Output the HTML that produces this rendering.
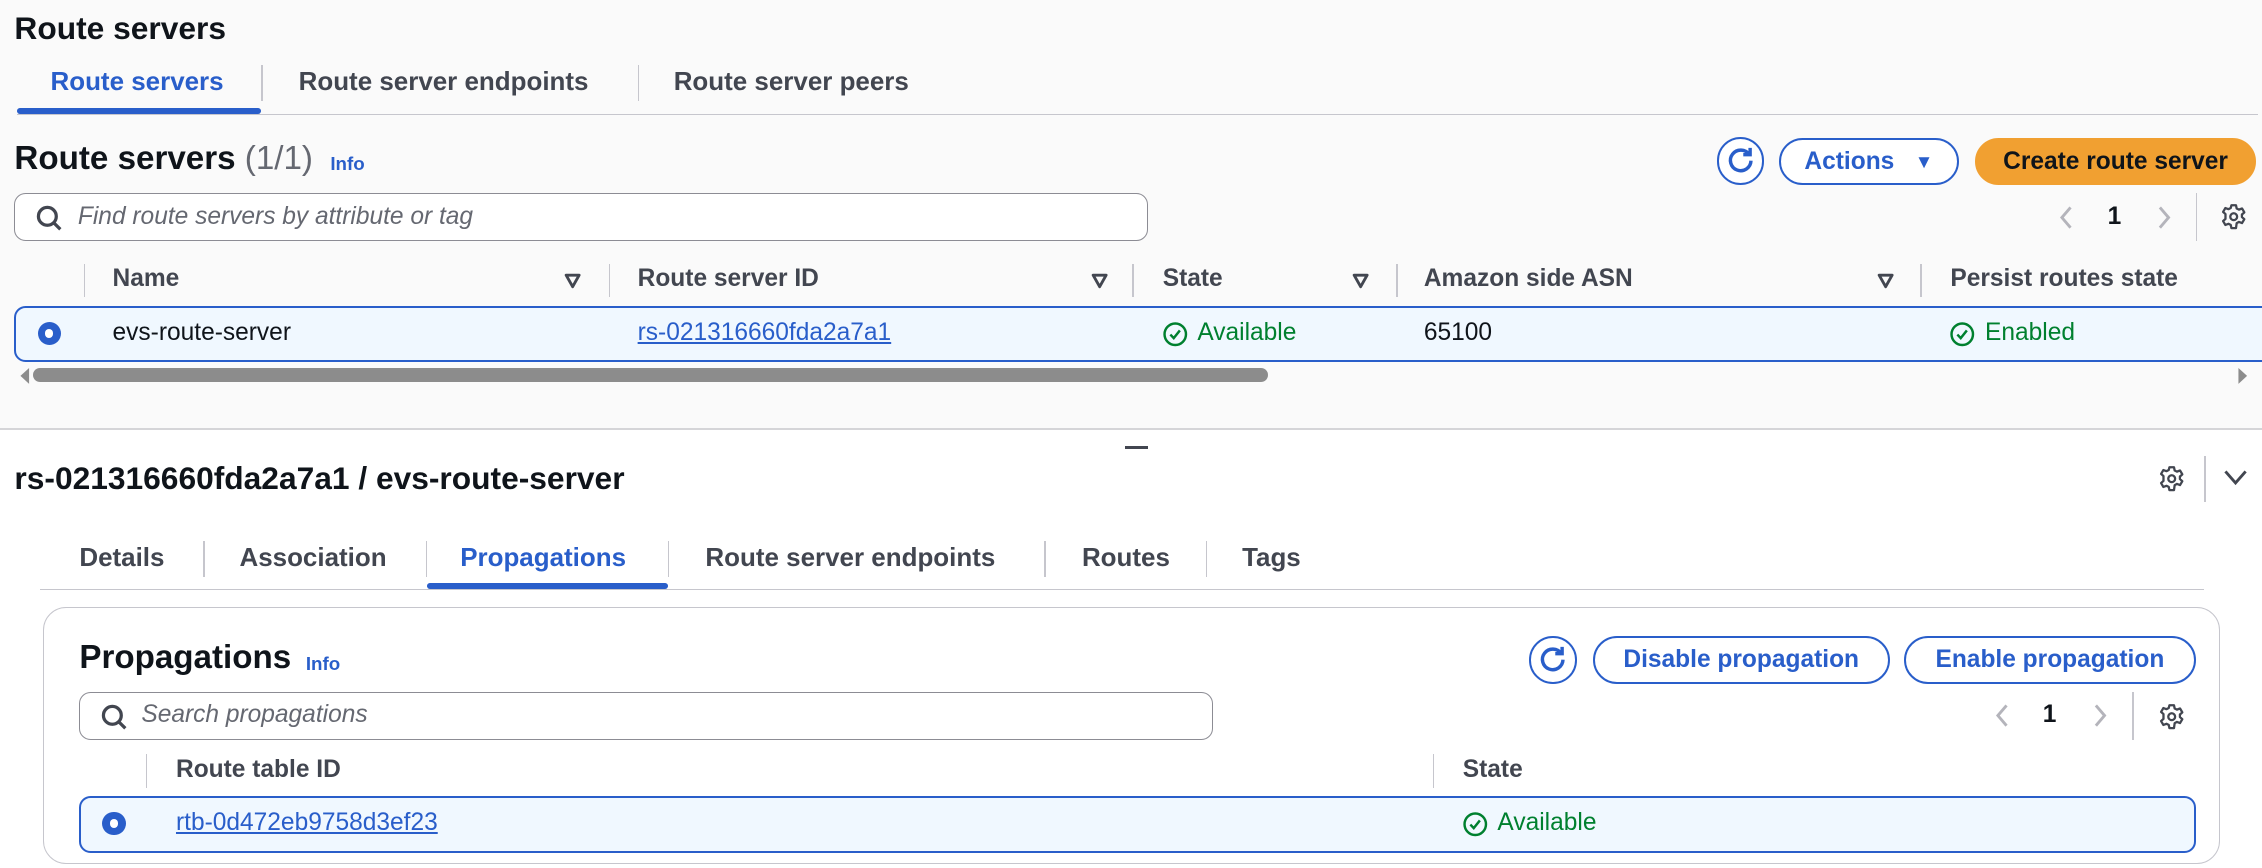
<!DOCTYPE html>
<html><head><meta charset="utf-8"><style>
html,body{margin:0;padding:0;width:2262px;height:868px;overflow:hidden;background:#fff}
#w{zoom:1.4426;width:1568px;height:602px;position:relative;font-family:"Liberation Sans",sans-serif;color:#0f141a;}
.a{position:absolute;white-space:nowrap}
.b{font-weight:bold}
.blue{color:#295eca}
.sep{position:absolute;width:1px;background:#c6c6cd}
.hl{position:absolute;height:1px;background:#c6c6cd}
.btn{position:absolute;border:2px solid #295eca;border-radius:18px;box-sizing:border-box;color:#295eca;font-weight:bold;font-size:17px;display:flex;align-items:center;justify-content:center;background:#fff}
.srch{position:absolute;border:1px solid #8c8c94;border-radius:8px;box-sizing:border-box;background:#fff}
.ph{position:absolute;font-style:italic;color:#656871;font-size:17px}
.row{position:absolute;border:2px solid #295eca;background:#f0f8ff;box-sizing:border-box}
.radio{position:absolute;width:16px;height:16px;border-radius:50%;background:#295eca;box-sizing:border-box}
.radio:after{content:"";position:absolute;left:5px;top:5px;width:6px;height:6px;border-radius:50%;background:#fff}
.lnk{color:#295eca;text-decoration:underline}
.ok{color:#00802f}
.h{font-size:17px;color:#424650;font-weight:bold}
.t{font-size:18px;font-weight:bold;color:#424650}
svg{position:absolute;overflow:visible}
</style></head><body><div id="w">
<div style="position:absolute;left:0;top:0;width:1568px;height:297px;background:#fafafa"></div>
<div class="hl" style="left:0;top:297px;width:1568px;background:#d5d5d8"></div>

<div class="a b" style="left:10px;top:7px;font-size:22px">Route servers</div>
<div class="a t blue" style="left:35px;top:46px;color:#295eca">Route servers</div>
<div class="a t" style="left:207px;top:46px">Route server endpoints</div>
<div class="a t" style="left:467px;top:46px">Route server peers</div>
<div class="sep" style="left:181px;top:45px;height:25px"></div>
<div class="sep" style="left:442px;top:45px;height:25px"></div>
<div class="hl" style="left:12px;top:79px;width:1553px"></div>
<div style="position:absolute;left:12px;top:75px;width:169px;height:4px;border-radius:2px;background:#295eca"></div>

<div class="a" style="left:10px;top:97px;font-size:23px"><b>Route servers</b> <span style="color:#656871">(1/1)</span></div>
<div class="a b blue" style="left:229px;top:106px;font-size:13px">Info</div>

<div class="btn" style="left:1190px;top:95px;width:33px;height:33px;border-radius:50%"></div>
<svg style="left:1197px;top:102px" width="19" height="19" viewBox="0 0 16 16"><path d="M13 4.5A6 6 0 1 0 14 8" fill="none" stroke="#295eca" stroke-width="2"/><path d="M9.5 4.5H13.5V0.5" fill="none" stroke="#295eca" stroke-width="2"/></svg>
<div class="btn" style="left:1233px;top:96px;width:125px;height:32px">Actions&nbsp;&nbsp;&nbsp;<span style="font-size:13px">▼</span></div>
<div class="btn" style="left:1369px;top:96px;width:195px;height:32px;background:#f1a031;border-color:#f1a031;color:#0f141a">Create route server</div>

<div class="srch" style="left:10px;top:134px;width:786px;height:33px"></div>
<svg style="left:25px;top:142px" width="18" height="18" viewBox="0 0 16 16"><circle cx="7" cy="7" r="5.5" fill="none" stroke="#424650" stroke-width="2"/><path d="M11 11L15 15" stroke="#424650" stroke-width="2"/></svg>
<div class="ph" style="left:54px;top:141px">Find route servers by attribute or tag</div>

<svg style="left:1427px;top:143px" width="10" height="16" viewBox="0 0 10 16"><path d="M8 1L2 8L8 15" fill="none" stroke="#b4b4bb" stroke-width="2"/></svg>
<div class="a b" style="left:1461px;top:141px;font-size:17px">1</div>
<svg style="left:1495px;top:143px" width="10" height="16" viewBox="0 0 10 16"><path d="M2 1L8 8L2 15" fill="none" stroke="#b4b4bb" stroke-width="2"/></svg>
<div class="sep" style="left:1522px;top:134px;height:33px"></div>
<svg style="left:1539px;top:141px" width="19" height="19" viewBox="0 0 24 24"><path d="M10 2h4l.6 2.8 2 1 2.7-1 2 3.4-2.1 1.9v2.2l2.1 1.9-2 3.4-2.7-1-2 1L14 22h-4l-.6-2.8-2-1-2.7 1-2-3.4 2.1-1.9V9.7L2.7 7.8l2-3.4 2.7 1 2-1z" fill="none" stroke="#424650" stroke-width="2" stroke-linejoin="round"/><circle cx="12" cy="12" r="3" fill="none" stroke="#424650" stroke-width="2"/></svg>

<div class="sep" style="left:58px;top:183px;height:23px"></div>
<div class="sep" style="left:422px;top:183px;height:23px"></div>
<div class="sep" style="left:785px;top:183px;height:23px"></div>
<div class="sep" style="left:968px;top:183px;height:23px"></div>
<div class="sep" style="left:1331px;top:183px;height:23px"></div>
<div class="a h" style="left:78px;top:184px">Name</div>
<div class="a h" style="left:442px;top:184px">Route server ID</div>
<div class="a h" style="left:806px;top:184px">State</div>
<div class="a h" style="left:987px;top:184px">Amazon side ASN</div>
<div class="a h" style="left:1352px;top:184px">Persist routes state</div>
<svg style="left:391px;top:189px" width="12" height="11" viewBox="0 0 12 11"><path d="M1.5 1.5H10.5L6 9.5Z" fill="none" stroke="#424650" stroke-width="2" stroke-linejoin="round"/></svg>
<svg style="left:756px;top:189px" width="12" height="11" viewBox="0 0 12 11"><path d="M1.5 1.5H10.5L6 9.5Z" fill="none" stroke="#424650" stroke-width="2" stroke-linejoin="round"/></svg>
<svg style="left:937px;top:189px" width="12" height="11" viewBox="0 0 12 11"><path d="M1.5 1.5H10.5L6 9.5Z" fill="none" stroke="#424650" stroke-width="2" stroke-linejoin="round"/></svg>
<svg style="left:1301px;top:189px" width="12" height="11" viewBox="0 0 12 11"><path d="M1.5 1.5H10.5L6 9.5Z" fill="none" stroke="#424650" stroke-width="2" stroke-linejoin="round"/></svg>

<div class="row" style="left:10px;top:212px;width:1570px;height:39px;border-radius:8px 0 0 8px"></div>
<div class="radio" style="left:26px;top:223px"></div>
<div class="a" style="left:78px;top:221px;font-size:17px">evs-route-server</div>
<div class="a lnk" style="left:442px;top:221px;font-size:17px">rs-021316660fda2a7a1</div>
<svg style="left:806px;top:223px" width="17" height="17" viewBox="0 0 16 16"><circle cx="8" cy="8" r="7" fill="none" stroke="#00802f" stroke-width="1.6"/><path d="M4.8 8.2L7 10.5L11 5.5" fill="none" stroke="#00802f" stroke-width="1.6"/></svg>
<div class="a ok" style="left:830px;top:221px;font-size:17px">Available</div>
<div class="a" style="left:987px;top:221px;font-size:17px">65100</div>
<svg style="left:1352px;top:223px" width="17" height="17" viewBox="0 0 16 16"><circle cx="8" cy="8" r="7" fill="none" stroke="#00802f" stroke-width="1.6"/><path d="M4.8 8.2L7 10.5L11 5.5" fill="none" stroke="#00802f" stroke-width="1.6"/></svg>
<div class="a ok" style="left:1376px;top:221px;font-size:17px">Enabled</div>

<svg style="left:13px;top:255px" width="8" height="11" viewBox="0 0 8 11"><path d="M7 0V11L1 5.5Z" fill="#8c8c8c"/></svg>
<div style="position:absolute;left:23px;top:255px;width:856px;height:10px;border-radius:5px;background:#8c8c8c"></div>
<svg style="left:1551px;top:255px" width="8" height="11" viewBox="0 0 8 11"><path d="M1 0V11L7 5.5Z" fill="#8c8c8c"/></svg>

<div style="position:absolute;left:780px;top:309px;width:16px;height:2px;background:#424650"></div>

<div class="a b" style="left:10px;top:319px;font-size:22px">rs-021316660fda2a7a1 / evs-route-server</div>
<svg style="left:1496px;top:322px" width="19" height="19" viewBox="0 0 24 24"><path d="M10 2h4l.6 2.8 2 1 2.7-1 2 3.4-2.1 1.9v2.2l2.1 1.9-2 3.4-2.7-1-2 1L14 22h-4l-.6-2.8-2-1-2.7 1-2-3.4 2.1-1.9V9.7L2.7 7.8l2-3.4 2.7 1 2-1z" fill="none" stroke="#424650" stroke-width="2" stroke-linejoin="round"/><circle cx="12" cy="12" r="3" fill="none" stroke="#424650" stroke-width="2"/></svg>
<div class="sep" style="left:1528px;top:316px;height:32px"></div>
<svg style="left:1542px;top:326px" width="16" height="10" viewBox="0 0 16 10"><path d="M1 1L8 9L15 1" fill="none" stroke="#424650" stroke-width="2"/></svg>

<div class="a t" style="left:55px;top:376px">Details</div>
<div class="a t" style="left:166px;top:376px">Association</div>
<div class="a t" style="left:319px;top:376px;color:#295eca">Propagations</div>
<div class="a t" style="left:489px;top:376px">Route server endpoints</div>
<div class="a t" style="left:750px;top:376px">Routes</div>
<div class="a t" style="left:861px;top:376px">Tags</div>
<div class="sep" style="left:141px;top:375px;height:25px"></div>
<div class="sep" style="left:295px;top:375px;height:25px"></div>
<div class="sep" style="left:463px;top:375px;height:25px"></div>
<div class="sep" style="left:724px;top:375px;height:25px"></div>
<div class="sep" style="left:836px;top:375px;height:25px"></div>
<div class="hl" style="left:28px;top:408px;width:1500px"></div>
<div style="position:absolute;left:296px;top:404px;width:167px;height:4px;border-radius:2px;background:#295eca"></div>

<div style="position:absolute;left:30px;top:421px;width:1509px;height:178px;border:1px solid #c6c6cd;border-radius:16px;box-sizing:border-box;background:#fff"></div>
<div class="a b" style="left:55px;top:443px;font-size:23px">Propagations</div>
<div class="a b blue" style="left:212px;top:453px;font-size:13px">Info</div>

<div class="btn" style="left:1060px;top:441px;width:33px;height:33px;border-radius:50%"></div>
<svg style="left:1067px;top:448px" width="19" height="19" viewBox="0 0 16 16"><path d="M13 4.5A6 6 0 1 0 14 8" fill="none" stroke="#295eca" stroke-width="2"/><path d="M9.5 4.5H13.5V0.5" fill="none" stroke="#295eca" stroke-width="2"/></svg>
<div class="btn" style="left:1104px;top:441px;width:206px;height:33px">Disable propagation</div>
<div class="btn" style="left:1320px;top:441px;width:202px;height:33px">Enable propagation</div>

<div class="srch" style="left:55px;top:480px;width:786px;height:33px"></div>
<svg style="left:70px;top:488px" width="18" height="18" viewBox="0 0 16 16"><circle cx="7" cy="7" r="5.5" fill="none" stroke="#424650" stroke-width="2"/><path d="M11 11L15 15" stroke="#424650" stroke-width="2"/></svg>
<div class="ph" style="left:98px;top:486px">Search propagations</div>

<svg style="left:1383px;top:488px" width="10" height="16" viewBox="0 0 10 16"><path d="M8 1L2 8L8 15" fill="none" stroke="#b4b4bb" stroke-width="2"/></svg>
<div class="a b" style="left:1416px;top:486px;font-size:17px">1</div>
<svg style="left:1451px;top:488px" width="10" height="16" viewBox="0 0 10 16"><path d="M2 1L8 8L2 15" fill="none" stroke="#b4b4bb" stroke-width="2"/></svg>
<div class="sep" style="left:1478px;top:480px;height:33px"></div>
<svg style="left:1496px;top:487px" width="19" height="19" viewBox="0 0 24 24"><path d="M10 2h4l.6 2.8 2 1 2.7-1 2 3.4-2.1 1.9v2.2l2.1 1.9-2 3.4-2.7-1-2 1L14 22h-4l-.6-2.8-2-1-2.7 1-2-3.4 2.1-1.9V9.7L2.7 7.8l2-3.4 2.7 1 2-1z" fill="none" stroke="#424650" stroke-width="2" stroke-linejoin="round"/><circle cx="12" cy="12" r="3" fill="none" stroke="#424650" stroke-width="2"/></svg>

<div class="sep" style="left:101px;top:523px;height:23px"></div>
<div class="sep" style="left:993px;top:523px;height:23px"></div>
<div class="a h" style="left:122px;top:524px">Route table ID</div>
<div class="a h" style="left:1014px;top:524px">State</div>

<div class="row" style="left:55px;top:552px;width:1467px;height:39px;border-radius:8px"></div>
<div class="radio" style="left:71px;top:563px"></div>
<div class="a lnk" style="left:122px;top:561px;font-size:17px">rtb-0d472eb9758d3ef23</div>
<svg style="left:1014px;top:563px" width="17" height="17" viewBox="0 0 16 16"><circle cx="8" cy="8" r="7" fill="none" stroke="#00802f" stroke-width="1.6"/><path d="M4.8 8.2L7 10.5L11 5.5" fill="none" stroke="#00802f" stroke-width="1.6"/></svg>
<div class="a ok" style="left:1038px;top:561px;font-size:17px">Available</div>
</div></body></html>
